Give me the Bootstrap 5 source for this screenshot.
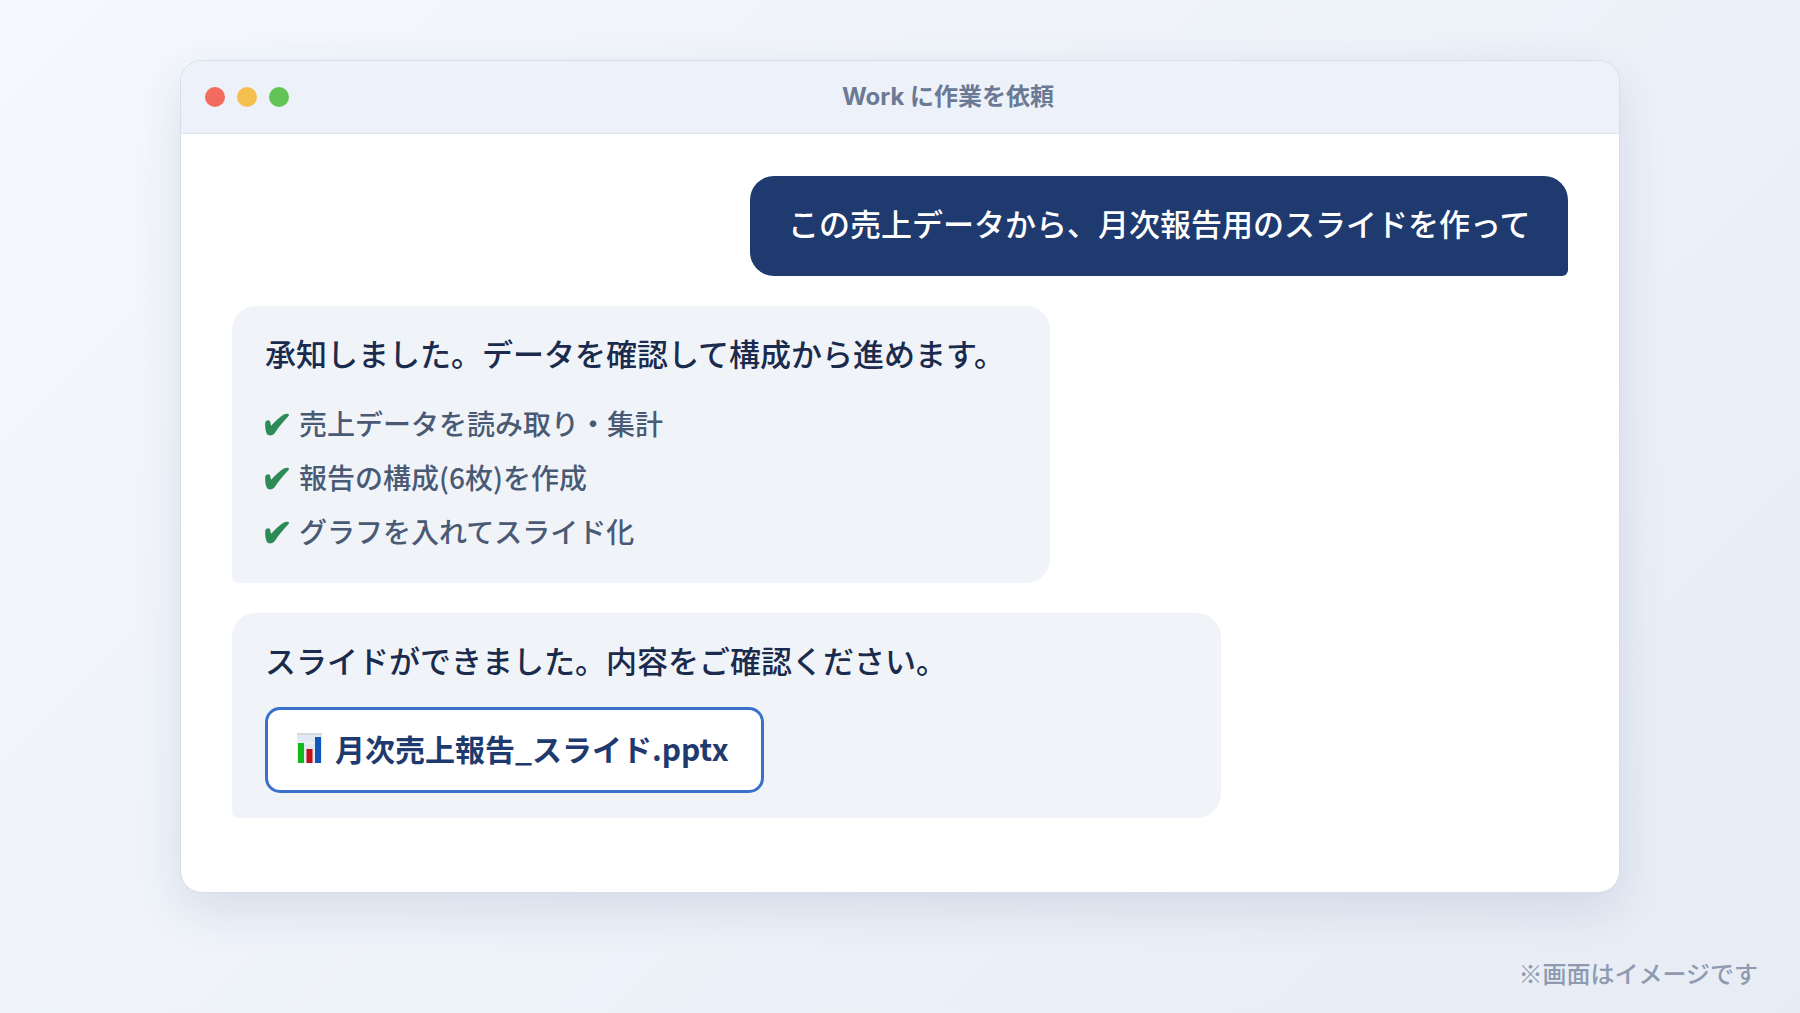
<!DOCTYPE html>
<html lang="ja">
<head>
<meta charset="utf-8">
<meta name="viewport" content="width=device-width, initial-scale=1">
<title>Work に作業を依頼</title>
<link href="https://cdn.jsdelivr.net/npm/bootstrap@5.3.0/dist/css/bootstrap.min.css" rel="stylesheet">
<style>
  body {
    font-family: "Noto Sans CJK JP", sans-serif;
    font-weight: 500;
    color: #1b2b4d;
    background: linear-gradient(135deg, #f5f9fd 0%, #eef2f9 50%, #e7ecf5 100%);
  }
  .stage { padding-top: 60px; }
  .app-window {
    width: 80%;
    border: 1px solid #d6deea;
    border-radius: 22px;
    box-shadow: 0 16px 48px rgba(31, 58, 110, .12);
  }
  .title-bar {
    gap: 12px;
    padding: 0 24px;
    height: 73px;
    background: #edf1f9;
    border-bottom: 1px solid #dbe2ec;
  }
  .light { width: 20px; height: 20px; }
  .light-red { background: #f26b5e; }
  .light-yellow { background: #f5bf4f; }
  .light-green { background: #61c454; }
  .title-text { font-family: Inter, "Noto Sans CJK JP", sans-serif; font-size: 24px; line-height: 36px; font-weight: 700; color: #6b7a94; }
  .chat { gap: 30px; padding: 42px 51px 74px; }
  .bubble {
    padding: 22px 33px 25px;
    font-size: 31px;
    line-height: 50px;
    border-radius: 24px;
    width: 61.2%;
  }
  .bubble-user { padding-bottom: 28px; background: #1f3a6e; color: #fff; text-align: center; border-bottom-right-radius: 6px; }
  .bubble-bot { background: #f0f4f9; border-bottom-left-radius: 6px; }
  .bubble-wide { width: 74%; }
  .steps { margin-top: 18px; font-size: 28px; line-height: 54px; color: #4a5a75; }
  .steps li { gap: 10px; }
  .tick { width: 24px; height: 24px; margin-top: 2px; fill: #2e8b57; }
  .file-chip {
    gap: 13px;
    margin-top: 22px;
    padding: 13px 32px 17px 29px;
    border: 3px solid #3a70cb;
    border-radius: 15px;
    background: #fff;
    color: #1f3a6e;
    font-size: 30px;
    font-weight: 700;
    line-height: 50px;
  }
  .footnote { padding: 0 42px; margin-top: 62px; font-size: 24px; line-height: 36px; color: #8d9ab0; }
</style>
</head>
<body class="min-vh-100">
<svg class="d-none" aria-hidden="true">
  <symbol id="tick" viewBox="0 0 24 24">
    <path d="M.3 10.500C.8 8.400 3.800 7.600 4.900 9.100 5.600 10.400 5.300 12.500 6.200 13.800 10 9.500 14.500 5.500 18.800 2.600 20.600 1.700 22.800 1.500 23.700 2.300 24.300 2.900 23.800 3.800 23.100 4.600 18 10 13.900 15 9.800 21 8.200 23.600 3.600 24.400 2 22 .4 19.200-.1 14 .3 10.500Z"/>
  </symbol>
</svg>
<div class="stage">
  <main class="app-window mx-auto bg-white overflow-hidden">
    <header class="title-bar d-flex align-items-center">
      <span class="light light-red rounded-circle"></span>
      <span class="light light-yellow rounded-circle"></span>
      <span class="light light-green rounded-circle"></span>
      <h1 class="title-text flex-grow-1 text-center mb-0">Work に作業を依頼</h1>
    </header>
    <section class="chat d-flex flex-column">
      <div class="bubble bubble-user align-self-end">この売上データから、月次報告用のスライドを作って</div>
      <div class="bubble bubble-bot">
        <p class="mb-0">承知しました。データを確認して構成から進めます。</p>
        <ul class="steps list-unstyled mb-0">
          <li class="d-flex align-items-center"><svg class="tick" aria-hidden="true"><use href="#tick"/></svg><span>売上データを読み取り・集計</span></li>
          <li class="d-flex align-items-center"><svg class="tick" aria-hidden="true"><use href="#tick"/></svg><span>報告の構成(6枚)を作成</span></li>
          <li class="d-flex align-items-center"><svg class="tick" aria-hidden="true"><use href="#tick"/></svg><span>グラフを入れてスライド化</span></li>
        </ul>
      </div>
      <div class="bubble bubble-bot bubble-wide d-flex flex-column align-items-start">
        <p class="mb-0">スライドができました。内容をご確認ください。</p>
        <a href="#" class="file-chip d-inline-flex align-items-center text-decoration-none">
          <svg width="25" height="30" viewBox="0 0 25 30" aria-hidden="true">
            <rect width="25" height="30" fill="#e3e9f0"/>
            <path d="M0 1H25" stroke="#d3dae0" stroke-width="2"/>
            <path d="M0 10H25M0 19H25" stroke="#f1f5f9"/>
            <rect x="1" y="10" width="6" height="20" fill="#12b81c"/>
            <rect x="9.500" y="16" width="6" height="14" fill="#c01018"/>
            <rect x="18" y="4" width="6" height="26" fill="#0f57b8"/>
          </svg>
          <span>月次売上報告_スライド.pptx</span>
        </a>
      </div>
    </section>
  </main>
  <footer class="footnote text-end">※画面はイメージです</footer>
</div>
<script src="https://cdn.jsdelivr.net/npm/bootstrap@5.3.0/dist/js/bootstrap.bundle.min.js"></script>
</body>
</html>
